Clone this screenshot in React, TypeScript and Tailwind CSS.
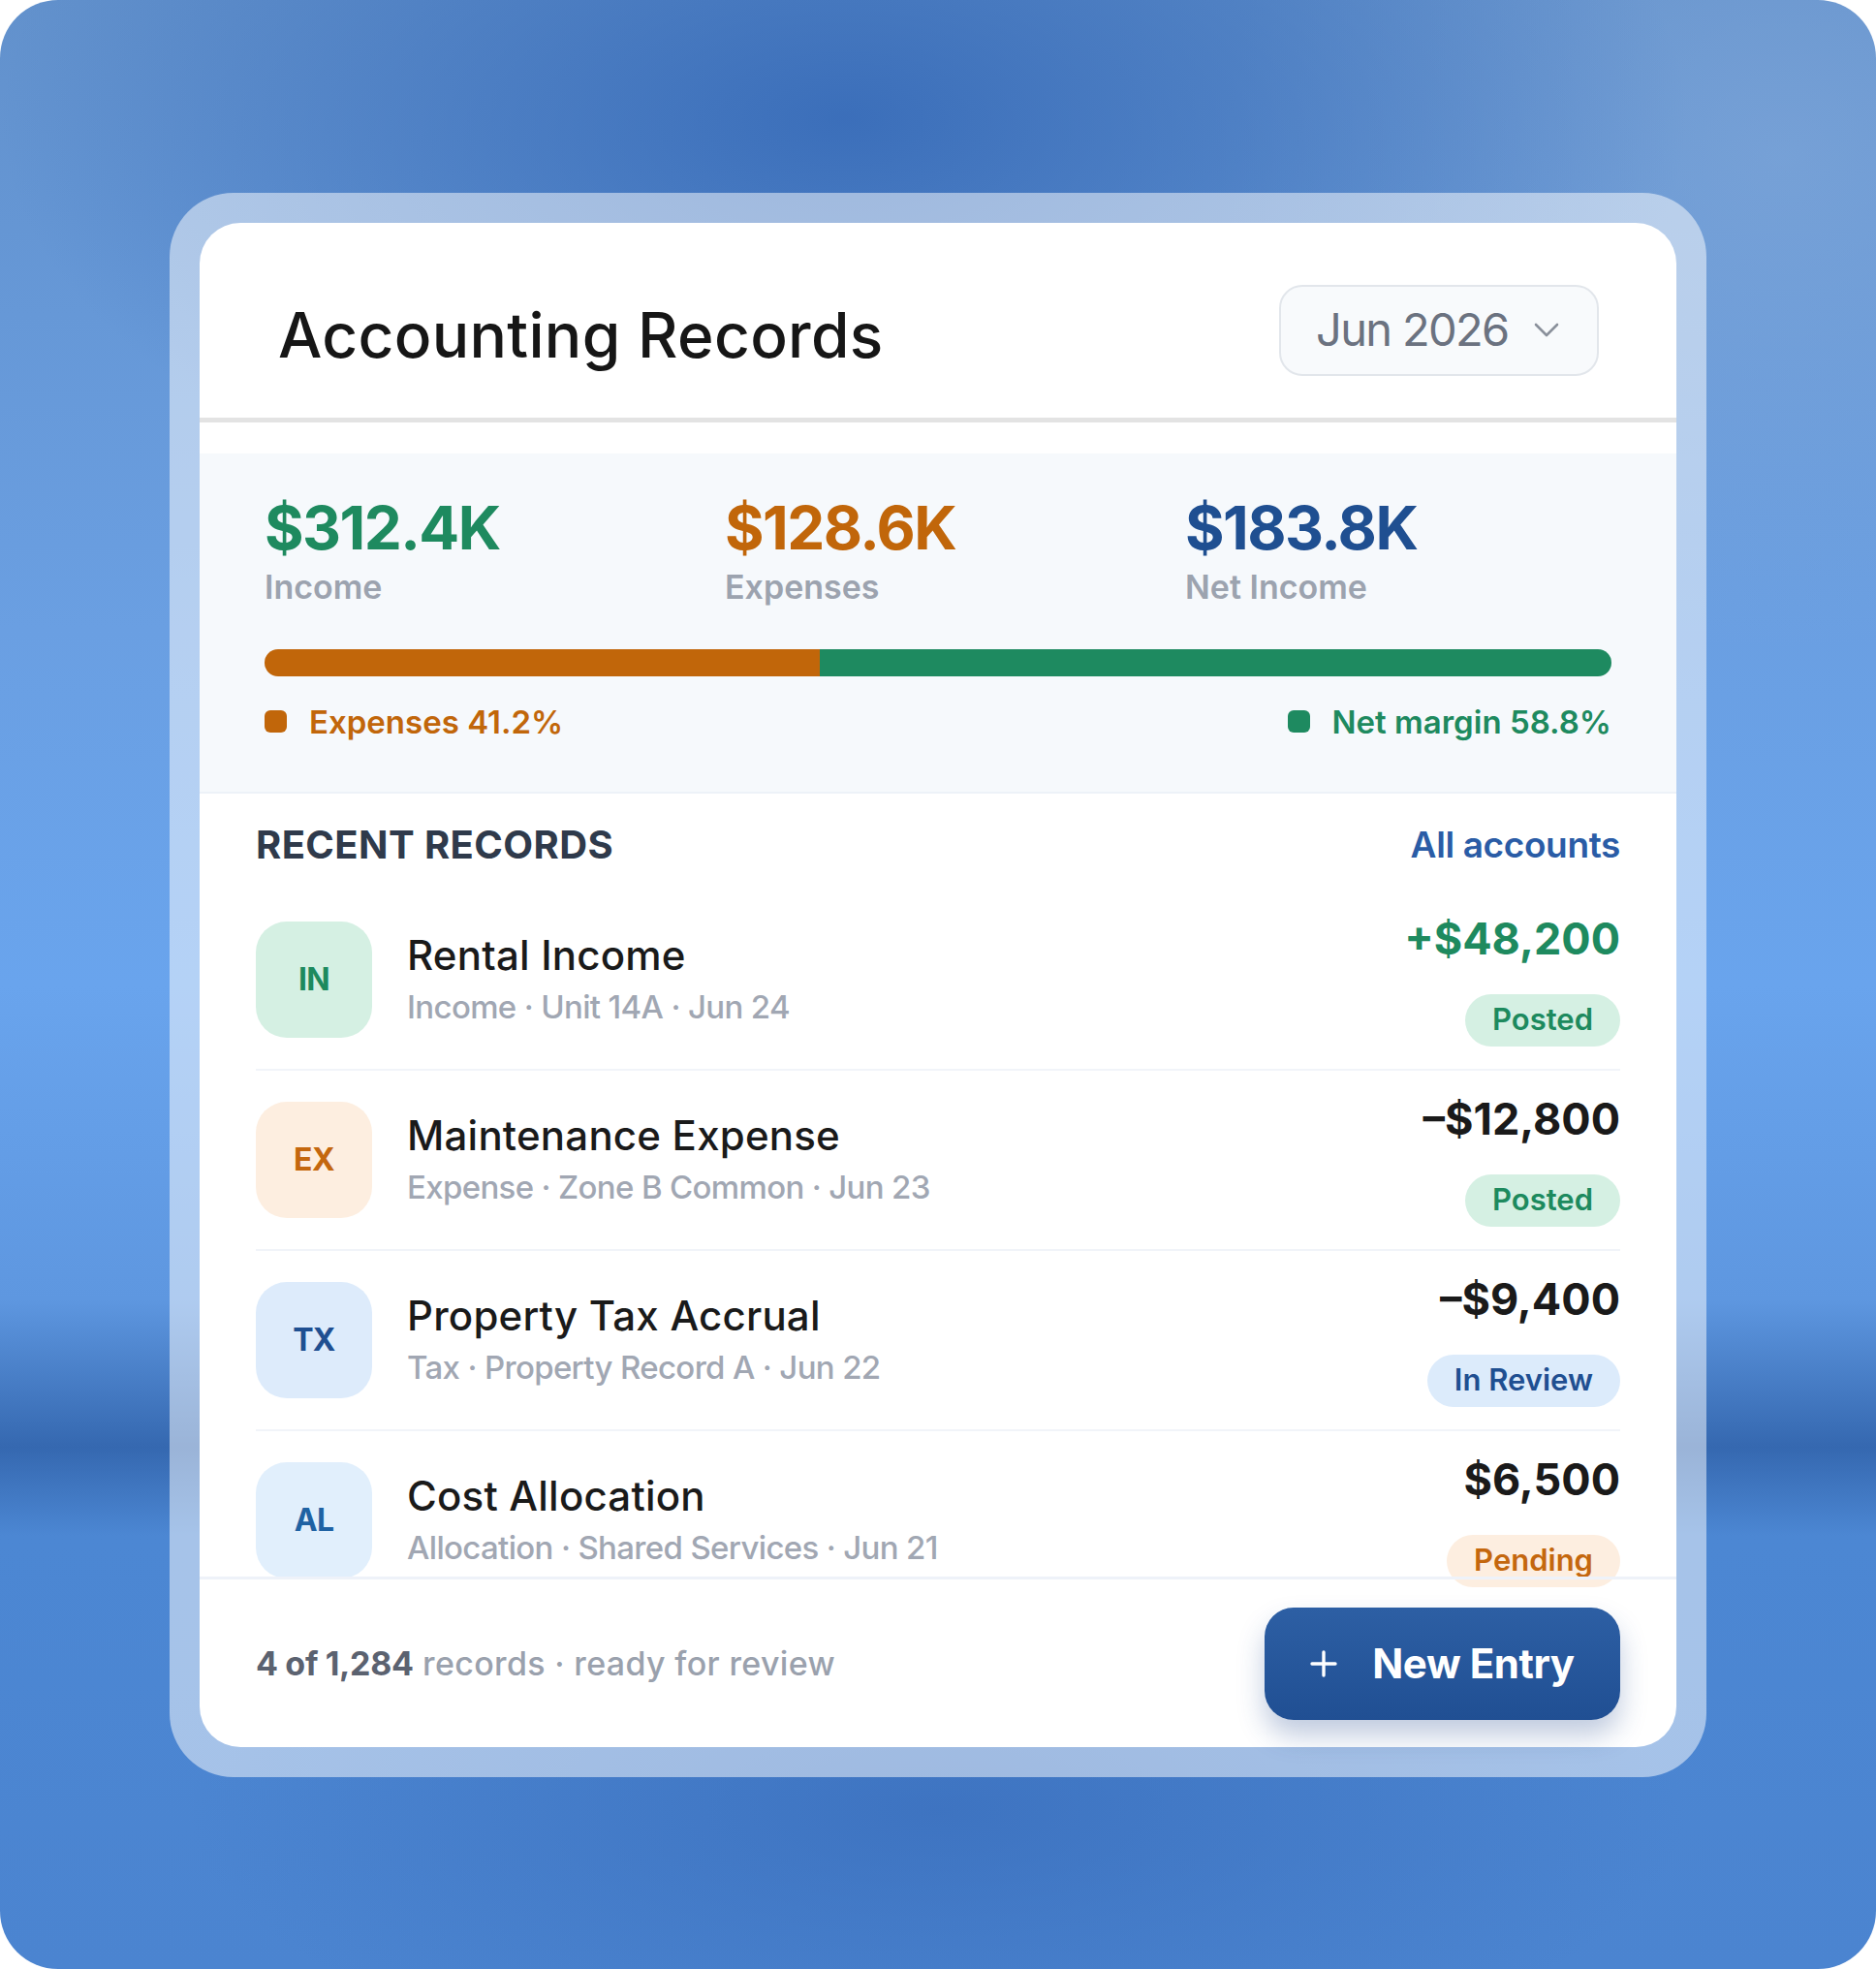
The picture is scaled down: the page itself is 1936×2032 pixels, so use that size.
type Tone = "green" | "orange" | "navy" | "blue";

type RecordRow = {
  code: string;
  title: string;
  meta: string;
  amount: string;
  status: string;
  tone: Tone;
  statusTone: Tone;
  amountClass: string;
};

const records: RecordRow[] = [
  {
    code: "IN",
    title: "Rental Income",
    meta: "Income · Unit 14A · Jun 24",
    amount: "+$48,200",
    status: "Posted",
    tone: "green",
    statusTone: "green",
    amountClass: "text-[#1e8a5f]",
  },
  {
    code: "EX",
    title: "Maintenance Expense",
    meta: "Expense · Zone B Common · Jun 23",
    amount: "–$12,800",
    status: "Posted",
    tone: "orange",
    statusTone: "green",
    amountClass: "text-[#1a1a1a]",
  },
  {
    code: "TX",
    title: "Property Tax Accrual",
    meta: "Tax · Property Record A · Jun 22",
    amount: "–$9,400",
    status: "In Review",
    tone: "navy",
    statusTone: "navy",
    amountClass: "text-[#1a1a1a]",
  },
  {
    code: "AL",
    title: "Cost Allocation",
    meta: "Allocation · Shared Services · Jun 21",
    amount: "$6,500",
    status: "Pending",
    tone: "blue",
    statusTone: "orange",
    amountClass: "text-[#1a1a1a]",
  },
];

const iconTone: Record<Tone, string> = {
  green: "bg-[#d5f0e3] text-[#1d8a5e]",
  orange: "bg-[#fdeee0] text-[#c4670e]",
  navy: "bg-[#ddebfb] text-[#1f4f91]",
  blue: "bg-[#e1effc] text-[#1f62a3]",
};

const badgeTone: Record<Tone, string> = {
  green: "bg-[#d5f0e3] text-[#1d8a5e]",
  orange: "bg-[#fdeee0] text-[#c4670e]",
  navy: "bg-[#dcebfb] text-[#1f4f91]",
  blue: "bg-[#e1effc] text-[#1f62a3]",
};

function Stat({ value, label, color }: { value: string; label: string; color: string }) {
  return (
    <div>
      <div className={`text-[62px] leading-[72px] font-bold tracking-[-0.025em] ${color}`}>{value}</div>
      <div className="mt-[4px] text-[34px] leading-[42px] font-semibold text-[#9ca3af]">{label}</div>
    </div>
  );
}

function RecordItem({ row, last }: { row: RecordRow; last: boolean }) {
  return (
    <li
      className={`flex items-center gap-[36px] py-[23px] ${last ? "" : "border-b-2 border-[#f1f4f9]"}`}
    >
      <div
        className={`flex size-[120px] shrink-0 items-center justify-center rounded-[32px] text-[32px] font-bold tracking-[-0.02em] ${iconTone[row.tone]}`}
      >
        {row.code}
      </div>
      <div className="min-w-0 flex-1">
        <div className="text-[42px] leading-[50px] font-medium tracking-[0.005em] text-[#1a1a1a]">{row.title}</div>
        <div className="mt-[7px] text-[33px] leading-[42px] font-medium tracking-[-0.02em] text-[#a1a7b3]">
          {row.meta}
        </div>
      </div>
      <div className="flex flex-col items-end">
        <div className={`text-[45px] leading-[54px] font-bold ${row.amountClass}`}>{row.amount}</div>
        <span
          className={`mt-[30px] inline-flex h-[54px] items-center rounded-full px-[28px] text-[31px] font-semibold ${badgeTone[row.statusTone]}`}
        >
          {row.status}
        </span>
      </div>
    </li>
  );
}

export default function App() {
  return (
    <div className="h-[2032px] w-[1936px] bg-white font-['Inter',sans-serif]">
      <div className="flex h-full w-full items-center justify-center overflow-hidden rounded-[60px] bg-[radial-gradient(ellipse_45%_22%_at_45%_6%,rgba(52,104,182,0.85),transparent),radial-gradient(ellipse_30%_25%_at_95%_8%,rgba(140,175,220,0.45),transparent),radial-gradient(ellipse_40%_14%_at_50%_92%,rgba(56,108,186,0.7),transparent),linear-gradient(180deg,#6291cc_0%,#6a9fe2_32%,#69a4ed_50%,#5e97e0_66%,#3568b0_73.5%,#4c87d3_78%,#4b84d0_100%)]">
        <div className="w-[1586px] rounded-[66px] bg-white/50 p-[31px]">
          <div className="rounded-[42px] bg-white">
            <header className="flex items-center justify-between border-b-[5px] border-[#e3e3e3] pt-[64px] pr-[80px] pb-[43px] pl-[81px]">
              <h1 className="mt-[10px] text-[64px] leading-[76px] font-medium tracking-[0.005em] text-[#161616]">
                Accounting Records
              </h1>
              <button className="flex h-[94px] w-[330px] items-center rounded-[24px] border-2 border-[#e2e6eb] bg-[#f8fafc] pl-[36px] text-[47px] tracking-[-0.035em] text-[#6b7280]">
                Jun 2026
                <svg className="ml-[26px]" width="26" height="15" viewBox="0 0 26 15" fill="none">
                  <path d="M2 2l11 11L24 2" stroke="#8a909b" strokeWidth="2.6" strokeLinecap="round" strokeLinejoin="round" />
                </svg>
              </button>
            </header>

            <section className="mt-[32px] border-b-2 border-[#edf2f8] bg-[#f6f9fc] px-[67px] pt-[41px] pb-[52px]">
              <div className="grid grid-cols-3 gap-x-[35px]">
                <Stat value="$312.4K" label="Income" color="text-[#1e8a5f]" />
                <Stat value="$128.6K" label="Expenses" color="text-[#c1660a]" />
                <Stat value="$183.8K" label="Net Income" color="text-[#1f4f91]" />
              </div>
              <div className="mt-[43px] flex h-[28px] overflow-hidden rounded-full">
                <div className="bg-[#c1660a]" style={{ width: "41.2%" }} />
                <div className="flex-1 bg-[#1e8a60]" />
              </div>
              <div className="mt-[27px] flex items-center justify-between text-[33px] leading-[40px] font-semibold">
                <span className="flex items-center gap-[23px] text-[#c1660a]">
                  <span className="size-[23px] rounded-[6px] bg-[#c1660a]" />
                  Expenses 41.2%
                </span>
                <span className="flex items-center gap-[23px] text-[#1e8a5f]">
                  <span className="size-[23px] rounded-[6px] bg-[#1e8a60]" />
                  Net margin 58.8%
                </span>
              </div>
            </section>

            <section className="h-[808px] px-[58px] pt-[30px]">
              <div className="mb-[24px] flex items-center justify-between">
                <h2 className="text-[40px] leading-[46px] font-bold tracking-[0.01em] text-[#2f3a4b]">RECENT RECORDS</h2>
                <a className="text-[37px] leading-[46px] font-semibold tracking-[-0.01em] text-[#2a5ca6]">All accounts</a>
              </div>
              <ul>
                {records.map((row, i) => (
                  <RecordItem key={row.code} row={row} last={i === records.length - 1} />
                ))}
              </ul>
            </section>

            <footer className="relative flex items-center justify-between border-t-[3px] border-[#eef2f9] px-[58px] pt-[29px] pb-[28px]">
              <p className="text-[34px] font-medium tracking-[0.01em] text-[#9aa1ad]">
                <span className="font-bold tracking-[-0.01em] text-[#5b6270]">4 of 1,284</span> records · ready for review
              </p>
              <button className="flex h-[116px] w-[367px] items-center justify-center gap-[36px] rounded-[30px] bg-[linear-gradient(180deg,#2d5fa4,#204f93)] text-[42px] font-bold tracking-[-0.01em] text-white shadow-[0_16px_28px_rgba(30,70,140,0.28)]">
                <svg width="28" height="28" viewBox="0 0 28 28" fill="none">
                  <path d="M14 2v24M2 14h24" stroke="white" strokeWidth="3.4" strokeLinecap="round" />
                </svg>
                New Entry
              </button>
            </footer>
          </div>
        </div>
      </div>
    </div>
  );
}
